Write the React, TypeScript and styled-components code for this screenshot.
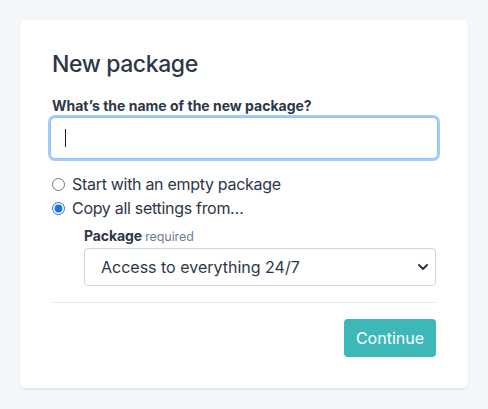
import styled, { createGlobalStyle } from 'styled-components'

const GlobalStyle = createGlobalStyle`
  html, body {
    margin: 0;
    padding: 0;
    background: #f4f7fa;
  }
  body {
    font-family: Inter, "Noto Sans", sans-serif;
    color: #2d3748;
    letter-spacing: -0.3px;
  }
`

export default function App() {
  return (
    <Page>
      <GlobalStyle />
      <Card>
        <Title>New package</Title>
        <FieldLabel htmlFor="name">What’s the name of the new package?</FieldLabel>
        <InputWrap>
          <NameInput id="name" type="text" />
          <Caret />
        </InputWrap>

        <Options>
          <Option>
            <Radio type="radio" name="start" />
            Start with an empty package
          </Option>
          <Option>
            <Radio type="radio" name="start" defaultChecked />
            Copy all settings from…
          </Option>
        </Options>

        <SubField>
          <SubLabel>
            Package <Hint>required</Hint>
          </SubLabel>
          <SelectWrap>
            <Select defaultValue="all">
              <option value="all">Access to everything 24/7</option>
            </Select>
            <Chevron viewBox="0 0 10 6" aria-hidden>
              <path d="M1 1l4 4 4-4" fill="none" stroke="#2d3748" strokeWidth="2" strokeLinecap="round" strokeLinejoin="round" />
            </Chevron>
          </SelectWrap>
        </SubField>

        <Divider />

        <Footer>
          <Button type="button">Continue</Button>
        </Footer>
      </Card>
    </Page>
  )
}

const Page = styled.div`
  padding: 20px;
  width: 488px;
  box-sizing: border-box;
`

const Card = styled.div`
  background: #fff;
  border-radius: 5px;
  box-shadow: 0 1px 3px rgba(0, 0, 0, 0.08), 0 1px 2px rgba(0, 0, 0, 0.04);
  padding: 26px 32px 31px;
  display: flex;
  flex-direction: column;
`

const Title = styled.h1`
  margin: 0 0 14px;
  font-size: 23px;
  line-height: 36px;
  font-weight: 500;
  letter-spacing: -0.4px;
`

const FieldLabel = styled.label`
  font-size: 14px;
  font-weight: 700;
  line-height: 20px;
  letter-spacing: 0;
  margin-bottom: 1px;
`

const InputWrap = styled.div`
  position: relative;
  margin: 0 -2px;
`

const NameInput = styled.input`
  width: 100%;
  box-sizing: border-box;
  height: 42px;
  border: 1px solid #8cc4f8;
  border-radius: 5px;
  box-shadow: 0 0 0 2px #a4ccfa;
  outline: none;
  padding: 0 12px;
  font: inherit;
  font-size: 16px;
  background: #fff;
`

const Caret = styled.span`
  position: absolute;
  left: 15px;
  top: 12px;
  width: 1px;
  height: 18px;
  background: #1a202c;
`

const Options = styled.div`
  margin-top: 13px;
  display: flex;
  flex-direction: column;
`

const Option = styled.label`
  display: flex;
  align-items: center;
  gap: 7px;
  font-size: 16px;
  line-height: 24px;
`

const Radio = styled.input`
  margin: 0;
  width: 13px;
  height: 13px;
  accent-color: #1a73e8;
`

const SubField = styled.div`
  margin: 6px 0 0 32px;
  display: flex;
  flex-direction: column;
`

const SubLabel = styled.div`
  font-size: 14px;
  font-weight: 700;
  line-height: 20px;
  letter-spacing: -0.1px;
  margin-bottom: 1px;
`

const Hint = styled.span`
  font-size: 12.5px;
  font-weight: 400;
  color: #718096;
`

const SelectWrap = styled.div`
  position: relative;
`

const Select = styled.select`
  width: 100%;
  height: 38px;
  appearance: none;
  border: 1px solid #cbd5e0;
  border-radius: 4px;
  background: #fff;
  padding: 0 16px;
  font: inherit;
  font-size: 16px;
  color: #2d3748;
`

const Chevron = styled.svg`
  position: absolute;
  right: 8px;
  top: 16px;
  width: 10px;
  height: 6px;
  pointer-events: none;
`

const Divider = styled.hr`
  border: 0;
  border-top: 1px solid #e2e8f0;
  margin: 16px 0;
`

const Footer = styled.div`
  display: flex;
  justify-content: flex-end;
`

const Button = styled.button`
  background: #3db8b9;
  color: #fff;
  border: 0;
  border-radius: 4px;
  height: 38px;
  padding: 0 12px;
  font: inherit;
  font-size: 16px;
`
